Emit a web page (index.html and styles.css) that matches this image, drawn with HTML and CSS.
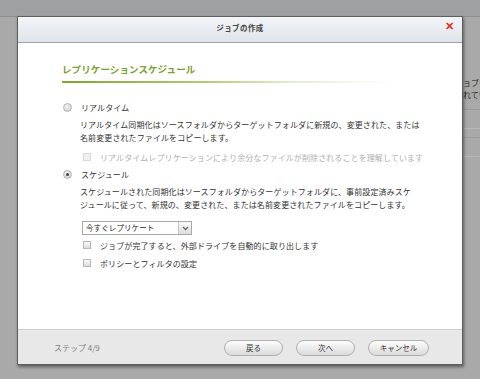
FILE: index.html
```
<!DOCTYPE html>
<html lang="ja">
  <head>
    <meta charset="UTF-8" />
    <meta name="viewport" content="width=device-width, initial-scale=1.0" />
    <title>ジョブの作成</title>
    <link rel="stylesheet" href="styles.css">
  </head>
  <body>
    <div class="page">
      <div class="topbar"></div>
      <div class="page-main">
        <p class="page-text">ジョブを作成<br />されています</p>
        <div class="page-row"></div>
        <div class="page-row"></div>
      </div>
    </div>

    <div class="dialog">
      <div class="dialog-head">
        <span class="dialog-title">ジョブの作成</span>
        <span class="close">&#x2715;</span>
      </div>

      <div class="dialog-body">
        <h2 class="section-title">レプリケーションスケジュール</h2>
        <div class="section-line"></div>

        <label class="radio-row"><span class="radio"></span>リアルタイム</label>
        <p class="desc">リアルタイム同期化はソースフォルダからターゲットフォルダに新規の、変更された、または<br />名前変更されたファイルをコピーします。</p>
        <label class="check-row disabled"><span class="check"></span>リアルタイムレプリケーションにより余分なファイルが削除されることを理解しています</label>

        <label class="radio-row schedule"><span class="radio checked"></span>スケジュール</label>
        <p class="desc">スケジュールされた同期化はソースフォルダからターゲットフォルダに、事前設定済みスケ<br />ジュールに従って、新規の、変更された、または名前変更されたファイルをコピーします。</p>

        <div class="select">
          <span class="select-value">今すぐレプリケート</span>
          <span class="select-arrow">
            <svg width="7" height="5" viewBox="0 0 7 5"><path d="M1 1 L3.5 3.5 L6 1" fill="none" stroke="#667" stroke-width="1.3" /></svg>
          </span>
        </div>

        <label class="check-row first"><span class="check"></span>ジョブが完了すると、外部ドライブを自動的に取り出します</label>
        <label class="check-row second"><span class="check"></span>ポリシーとフィルタの設定</label>
      </div>

      <div class="dialog-foot">
        <span class="step">ステップ 4/9</span>
        <div class="buttons">
          <button class="btn">戻る</button>
          <button class="btn">次へ</button>
          <button class="btn">キャンセル</button>
        </div>
      </div>
    </div>
  </body>
</html>
```

FILE: styles.css
```
body {
  margin: 0;
  width: 480px;
  height: 379px;
  overflow: hidden;
  background: #a9a9a9;
  font-family: "Noto Sans CJK JP", "Noto Sans", sans-serif;
  color: #333;
}
.page {
  height: 379px;
}
.topbar {
  height: 16px;
  background: #9fa0a2;
  border-bottom: 1px solid #8e8f91;
}
.page-main {
  padding-top: 60px;
  padding-left: 455px;
  overflow: hidden;
}
.page-text {
  margin: 0;
  font-size: 8px;
  line-height: 12px;
  color: #222;
  white-space: nowrap;
}
.page-row {
  height: 18px;
  margin-top: 8px;
  border-top: 1px solid #9a9a9a;
  border-bottom: 1px solid #b8b8b8;
}

/* dialog lies over the page */
.dialog {
  position: absolute;
  left: 17px;
  top: 16px;
  width: 444px;
  height: 347px;
  background: #fff;
  border: 1px solid #5e5e5e;
  box-shadow: 1px 2px 3px rgba(0, 0, 0, 0.45);
  display: flex;
  flex-direction: column;
}
.dialog-head {
  height: 21px;
  padding-bottom: 4px;
  flex-shrink: 0;
  background: linear-gradient(#f3f5f7, #dfe4ea);
  border-bottom: 1px solid #9aa2ab;
  display: flex;
  align-items: center;
  justify-content: center;
  position: relative;
}
.dialog-title {
  font-size: 7.5px;
  font-weight: bold;
  color: #444;
  letter-spacing: 0.4px;
}
.close {
  position: absolute;
  right: 8px;
  top: 0;
  font-size: 11px;
  font-weight: bold;
  color: #d8322e;
}
.dialog-body {
  flex: 1;
  padding: 19px 0 0 44px;
  font-size: 8px;
  letter-spacing: 0.1px;
}
.section-title {
  margin: 0;
  font-size: 9.5px;
  line-height: 14px;
  font-weight: bold;
  color: #79a22c;
}
.section-line {
  width: 330px;
  height: 2px;
  margin-top: 5px;
  background: linear-gradient(to right, #7ba830, #a9c96a 40%, rgba(200, 222, 160, 0.5) 70%, rgba(255, 255, 255, 0));
}
.radio-row,
.check-row {
  display: flex;
  align-items: center;
  height: 14px;
  color: #333;
}
.radio-row {
  margin-top: 17px;
}
.radio-row.schedule {
  margin-top: 3px;
}
.radio {
  width: 7px;
  height: 7px;
  border-radius: 50%;
  border: 1px solid #b4b4b4;
  background: radial-gradient(circle at 40% 35%, #f4f4f4, #c8c8c8);
  margin: 0 9px 0 1px;
  display: flex;
  align-items: center;
  justify-content: center;
}
.radio.checked::after {
  content: "";
  width: 3px;
  height: 3px;
  border-radius: 50%;
  background: #444;
}
.desc {
  margin: 4px 0 0 18px;
  line-height: 13px;
  color: #333;
}
.check-row {
  margin-left: 21px;
}
.check {
  width: 6px;
  height: 6px;
  border: 1px solid #b8b8b8;
  background: linear-gradient(#fafafa, #dcdcdc);
  margin-right: 9px;
}
.check-row.disabled {
  margin-top: 6px;
  color: #b0b0b0;
}
.check-row.disabled .check {
  border-color: #d8d8d8;
  background: #f0f0f0;
}
.check-row.first {
  margin-top: 3px;
}
.check-row.second {
  margin-top: 4px;
}
.select {
  display: flex;
  width: 108px;
  height: 12px;
  margin: 10px 0 0 20px;
  border: 1px solid #a8a8a8;
  background: #fff;
}
.select-value {
  flex: 1;
  padding-left: 3px;
  line-height: 12px;
  font-size: 7.5px;
  color: #222;
}
.select-arrow {
  width: 12px;
  border-left: 1px solid #c4c4c4;
  background: linear-gradient(#fafafa, #dedede);
  display: flex;
  align-items: center;
  justify-content: center;
}
.dialog-foot {
  height: 34px;
  flex-shrink: 0;
  background: #e8e8e8;
  border-top: 1px solid #cfcfcf;
  display: flex;
  align-items: center;
  padding: 0 33px 0 36px;
}
.step {
  flex: 1;
  font-size: 8px;
  color: #808080;
}
.buttons {
  display: flex;
  gap: 13px;
  padding-top: 1px;
}
.btn {
  width: 59px;
  height: 16px;
  padding: 0;
  border: 1px solid #b0b0b0;
  border-radius: 8px;
  background: linear-gradient(#fdfdfd, #dadada);
  font-family: inherit;
  font-size: 7.5px;
  color: #333;
  cursor: pointer;
}
.btn:last-child {
  width: 61px;
}
```
